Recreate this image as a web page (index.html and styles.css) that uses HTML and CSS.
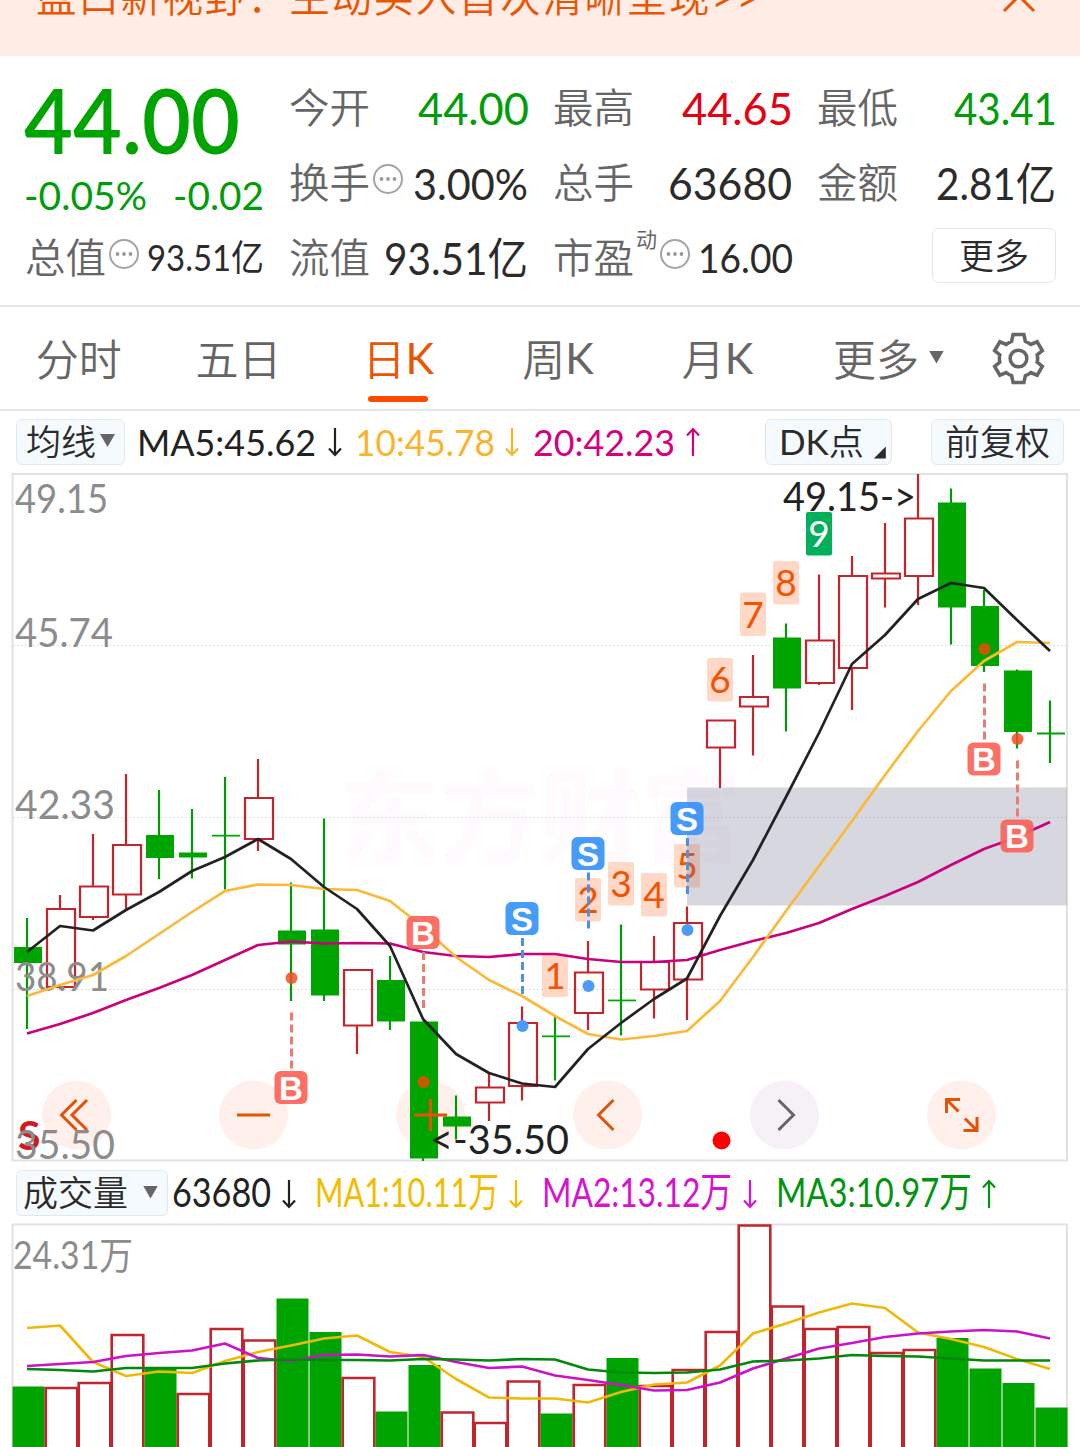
FILE: index.html
```html
<!DOCTYPE html>
<html lang="zh-CN">
<head>
<meta charset="utf-8">
<title>日K</title>
<link rel="stylesheet" href="styles.css">
</head>
<body>
<div class="banner">
  <span class="banner-text">盘口新视野：主动买入首次清晰呈现<span class="latin">&gt;&gt;</span></span>
  <svg class="banner-close" width="34" height="34" viewBox="0 0 34 34"><path d="M2 2 32 32M32 2 2 32"/></svg>
</div>

<section class="quote">
  <div class="col">
    <div class="price"><svg class="num strong green" width="215" height="80"><text x="-2" y="73" font-size="90" textLength="216" lengthAdjust="spacingAndGlyphs">44.00</text></svg></div>
    <div class="change">
      <svg class="num green" width="121" height="40"><text x="-2" y="35.500" font-size="39.5" textLength="123" lengthAdjust="spacingAndGlyphs">-0.05%</text></svg>
      <svg class="num green" width="89" height="40"><text x="-1" y="35.500" font-size="39.5" textLength="91" lengthAdjust="spacingAndGlyphs">-0.02</text></svg>
    </div>
    <div class="cell"><span class="label">总值</span><svg class="info" viewBox="0 0 32 32"><use href="#info"/></svg><svg class="num push" width="115" height="44"><text x="-1" y="34" font-size="36" textLength="117" lengthAdjust="spacingAndGlyphs">93.51亿</text></svg></div>
  </div>
  <div class="col">
    <div class="cell"><span class="label">今开</span><svg class="num push green" width="108" height="44"><text x="-1" y="38" font-size="44" textLength="111" lengthAdjust="spacingAndGlyphs">44.00</text></svg></div>
    <div class="cell"><span class="label">换手</span><svg class="info" viewBox="0 0 32 32"><use href="#info"/></svg><svg class="num push" width="113" height="44"><text x="-1" y="38" font-size="43" textLength="115" lengthAdjust="spacingAndGlyphs">3.00%</text></svg></div>
    <div class="cell"><span class="label">流值</span><svg class="num push" width="142" height="44"><text x="-1" y="38" font-size="44" textLength="144" lengthAdjust="spacingAndGlyphs">93.51亿</text></svg></div>
  </div>
  <div class="col">
    <div class="cell"><span class="label">最高</span><svg class="num push red" width="108" height="44"><text x="-1" y="38" font-size="44" textLength="111" lengthAdjust="spacingAndGlyphs">44.65</text></svg></div>
    <div class="cell"><span class="label">总手</span><svg class="num push" width="121" height="44"><text x="-2" y="38" font-size="44" textLength="124" lengthAdjust="spacingAndGlyphs">63680</text></svg></div>
    <div class="cell"><span class="label">市盈</span><span class="sup">动</span><svg class="info" viewBox="0 0 32 32"><use href="#info"/></svg><svg class="num push" width="90" height="44"><text x="-3" y="36" font-size="40" textLength="95" lengthAdjust="spacingAndGlyphs">16.00</text></svg></div>
  </div>
  <div class="col">
    <div class="cell"><span class="label">最低</span><svg class="num push green" width="100" height="44"><text x="-1" y="38" font-size="44" textLength="103" lengthAdjust="spacingAndGlyphs">43.41</text></svg></div>
    <div class="cell"><span class="label">金额</span><svg class="num push" width="118" height="44"><text x="-1" y="38" font-size="44" textLength="120" lengthAdjust="spacingAndGlyphs">2.81亿</text></svg></div>
    <div class="cell"><button class="more">更多</button></div>
  </div>
</section>

<nav class="tabs">
  <a class="tab">分时</a>
  <a class="tab">五日</a>
  <a class="tab active">日<span class="latin">K</span></a>
  <a class="tab">周<span class="latin">K</span></a>
  <a class="tab">月<span class="latin">K</span></a>
  <a class="tab tab-more">更多<i class="tri"></i></a>
  <svg class="gear" viewBox="-27 -27 54 54"><path d="M-5.500-24.500H5.500L7-17.500Q10-16.500 12.500-14.300L19-17 24.300-8 19-3.700Q20 0 19 3.700L24.300 8 19 17 12.500 14.300Q10 16.500 7 17.500L5.500 24.500H-5.500L-7 17.500Q-10 16.500-12.500 14.300L-19 17-24.300 8-19 3.700Q-20 0-19-3.700L-24.300-8-19-17-12.500-14.300Q-10-16.500-7-17.500Z"/><circle r="8.500"/></svg>
</nav>

<div class="legend legend-price">
  <button class="chip chip-ma">均线<i class="tri"></i></button>
  <div class="series s-black"><svg class="num" width="177" height="44"><text x="-2" y="36" font-size="37.5" textLength="179" lengthAdjust="spacingAndGlyphs">MA5:45.62</text></svg><svg class="arrow" viewBox="0 0 14 30"><use href="#down"/></svg></div>
  <div class="series s-orange"><svg class="num" width="137" height="44"><text x="-2" y="36" font-size="37.5" textLength="140" lengthAdjust="spacingAndGlyphs">10:45.78</text></svg><svg class="arrow" viewBox="0 0 14 30"><use href="#down"/></svg></div>
  <div class="series s-pink"><svg class="num" width="140" height="44"><text x="-1" y="36" font-size="37.5" textLength="142" lengthAdjust="spacingAndGlyphs">20:42.23</text></svg><svg class="arrow" viewBox="0 0 14 30"><use href="#up"/></svg></div>
  <button class="chip chip-dk"><span class="latin">DK</span>点<i class="corner"></i></button>
  <button class="chip chip-adj">前复权</button>
</div>

<svg class="chart" id="price" viewBox="0 472 1080 690">
  <text class="watermark" x="338" y="855" textLength="404">东方财富</text>
  <path class="frame" d="M12.5 474H1067V1160.500H12.500Z"/>
  <path class="grid" d="M13 645.500H1067M13 817.500H1067M13 989.500H1067"/>
  <g class="pads">
    <circle cx="76.500" cy="1115" r="34.500"/><circle cx="253.500" cy="1115" r="34.500"/><circle cx="430.500" cy="1115" r="34.500"/><circle cx="607.500" cy="1115" r="34.500"/><circle class="off" cx="784.500" cy="1115" r="34.500"/><circle cx="961.500" cy="1115" r="34.500"/>
  </g>
  <text class="note" x="783" y="511" textLength="133" lengthAdjust="spacingAndGlyphs">49.15-&gt;</text>
  <g id="tags"></g>
  <rect class="gap" x="687" y="787.500" width="380" height="118"/>
  <g id="candles"></g>
  <g class="axis">
    <text x="15" y="513" textLength="93" lengthAdjust="spacingAndGlyphs">49.15</text>
    <text x="15" y="647" textLength="98" lengthAdjust="spacingAndGlyphs">45.74</text>
    <text x="15" y="819" textLength="100" lengthAdjust="spacingAndGlyphs">42.33</text>
    <text x="15" y="991" textLength="94" lengthAdjust="spacingAndGlyphs">38.91</text>
  </g>
  <g id="averages"></g>
  <g id="signals"></g>
  <text class="split" x="18" y="1150">S</text>
  <g class="axis"><text x="15" y="1159" textLength="100" lengthAdjust="spacingAndGlyphs">35.50</text></g>
  <text class="note" x="430" y="1154" textLength="139" lengthAdjust="spacingAndGlyphs">&lt;-35.50</text>
  <circle cx="721.500" cy="1140.500" r="9" fill="#f00"/>
  <g class="icons">
    <path d="M76.500 1100 61.500 1115 76.500 1130M87 1100 72 1115 87 1130"/>
    <path d="M237 1115H270"/>
    <path d="M414 1115H447M430.500 1099V1131"/>
    <path d="M613.500 1100 598.500 1115 613.500 1130"/>
    <path class="off" d="M778.500 1100 793.500 1115 778.500 1130"/>
    <path d="M946.500 1113V1099.500H960M947 1100 958.500 1111.500M977 1117V1130.500H963.500M976.500 1130 965 1118.500"/>
  </g>
</svg>

<div class="legend legend-volume">
  <button class="chip chip-vol">成交量<i class="tri"></i></button>
  <div class="series s-black"><svg class="num" width="97" height="44"><text x="-1" y="36" font-size="41" textLength="99" lengthAdjust="spacingAndGlyphs">63680</text></svg><svg class="arrow" viewBox="0 0 14 30"><use href="#down"/></svg></div>
  <div class="series s-yellow"><svg class="num" width="181" height="44"><text x="-2" y="36" font-size="41" textLength="184" lengthAdjust="spacingAndGlyphs">MA1:10.11万</text></svg><svg class="arrow" viewBox="0 0 14 30"><use href="#down"/></svg></div>
  <div class="series s-purple"><svg class="num" width="187" height="44"><text x="-2" y="36" font-size="41" textLength="190" lengthAdjust="spacingAndGlyphs">MA2:13.12万</text></svg><svg class="arrow" viewBox="0 0 14 30"><use href="#down"/></svg></div>
  <div class="series s-green"><svg class="num" width="193" height="44"><text x="-2" y="36" font-size="41" textLength="196" lengthAdjust="spacingAndGlyphs">MA3:10.97万</text></svg><svg class="arrow" viewBox="0 0 14 30"><use href="#up"/></svg></div>
</div>

<svg class="chart" id="volume" viewBox="0 1222 1080 225">
  <path class="frame" d="M12.500 1450V1224.500H1067V1450"/>
  <g class="axis"><text x="13" y="1269" textLength="120" font-size="38" lengthAdjust="spacingAndGlyphs">24.31万</text></g>
  <g id="bars"></g>
  <g id="volume-averages"></g>
</svg>

<svg class="defs" width="0" height="0">
  <defs>
    <g id="info"><circle cx="16" cy="16" r="14" fill="none" stroke="#a3a3a3" stroke-width="2"/><g fill="#999"><circle cx="9.500" cy="16" r="1.900"/><circle cx="16" cy="16" r="1.900"/><circle cx="22.500" cy="16" r="1.900"/></g></g>
    <path id="down" d="M7 1V28M1 21.500 7 28 13 21.500"/>
    <path id="up" d="M7 29V2M1 8.500 7 2 13 8.500"/>
  </defs>
</svg>
<script src="chart.js"></script>
</body>
</html>
```
FILE: styles.css
```css
* { box-sizing: border-box; }
body {
  margin: 0;
  width: 1080px;
  height: 1447px;
  overflow: hidden;
  background: #fff;
  color: #2b2b2b;
  font-family: Lato, "Noto Sans CJK SC", sans-serif;
}
svg { display: block; flex: none; }
button { font-family: inherit; color: inherit; padding: 0; margin: 0; }
.defs { height: 0; }
.latin { font-weight: 400; }

.banner {
  height: 56px;
  background: #ffece4;
  display: flex;
  justify-content: space-between;
  padding: 0 44px 0 36px;
  overflow: hidden;
  color: #ea5504;
}
.banner-text {
  font: 350 40.500px/60px Lato, "Noto Sans CJK SC", sans-serif;
  letter-spacing: 1.700px;
  margin-top: -33px;
  white-space: nowrap;
}
.banner-close { margin-top: -21px; fill: none; stroke: #ea5504; stroke-width: 3; }

.num { overflow: visible; fill: currentColor; }
.strong { font-weight: 600; }
.green { color: #009d08; }
.strong.green { color: #00a400; }
.red { color: #e60012; }

.quote {
  height: 251px;
  padding: 15px 25px 0 26px;
  display: grid;
  grid-template-columns: repeat(4, 237px);
  column-gap: 27px;
  border-bottom: 2px solid #e6e6e6;
}
.col { display: flex; flex-direction: column; }
.cell { height: 75px; display: flex; align-items: center; }
.label { font-size: 40.500px; line-height: 60px; margin: -2px 1px 0 -1px; color: #666; font-weight: 350; white-space: nowrap; }
.info { width: 32px; height: 32px; margin: -9px 0 0 1px; }
.push { margin-left: auto; }
.sup { font-size: 21px; line-height: 24px; color: #666; margin: -40px 0 0 1px; }
.sup + .info { margin-left: 2px; }
.price { height: 98px; padding-top: 10px; }
.change { height: 52px; padding-top: 5px; display: flex; justify-content: space-between; }
.more {
  width: 124px;
  height: 55px;
  margin: -7px -1px 0 auto;
  border: 1.500px solid #e6e6e9;
  border-radius: 7px;
  background: #fff;
  font-size: 35px;
  font-weight: 350;
  line-height: 50px;
}

.tabs {
  height: 104px;
  display: flex;
  align-items: center;
  border-bottom: 2px solid #e6e6e6;
  color: #666;
  font-size: 43px;
  font-weight: 350;
}
.tab {
  width: 159.700px;
  height: 102px;
  display: flex;
  justify-content: center;
  align-items: center;
  position: relative;
  padding-bottom: 2px;
  white-space: nowrap;
}
.tab:first-child { margin-left: -1px; }
.active { color: #ea5504; }
.active::after {
  content: "";
  position: absolute;
  left: 50px;
  bottom: 7px;
  width: 60px;
  height: 6px;
  border-radius: 3px;
  background: #fa4b00;
}
.tab-more { width: 182px; }
.tab-more .tri { margin-left: 10px; }
.gear { width: 53px; height: 53px; margin-left: 13px; fill: none; stroke: #666; stroke-width: 3.600; stroke-linejoin: miter; }
.tri {
  width: 15px;
  height: 13px;
  background: #666;
  clip-path: polygon(0 0, 100% 0, 50% 100%);
}

.legend { display: flex; align-items: center; }
.legend-price { height: 61px; padding: 0 16px; }
.legend-volume { height: 60px; padding: 2px 16px 0; }
.chip {
  height: 46px;
  display: flex;
  align-items: center;
  border: 1.500px solid #e3e8f0;
  border-radius: 6px;
  background: #f5faff;
  font-size: 35px;
  font-weight: 350;
  line-height: 38px;
  padding-bottom: 2px;
  white-space: nowrap;
}
.chip-ma { width: 109px; padding-left: 9px; margin-right: 14px; }
.chip-ma .tri { margin-left: 4px; }
.chip-dk { width: 127px; padding-left: 13px; margin: 1px 0 0 auto; }
.chip-adj { width: 133px; justify-content: center; margin: 1px 0 0 39px; }
.chip-vol { width: 152px; padding-left: 6px; margin-right: 5px; }
.chip-vol .tri { margin-left: 15px; }
.corner {
  width: 12px;
  height: 12px;
  margin: 23px 0 0 10px;
  background: #2b2b2b;
  clip-path: polygon(100% 0, 100% 100%, 0 100%);
}
.series { display: flex; align-items: center; margin-right: 15px; }
.legend-volume .series { margin-right: 21px; }
.arrow { width: 14px; height: 30px; margin: 1px 0 0 11.500px; fill: none; stroke: currentColor; stroke-width: 2.200; }
.s-black { color: #222; }
.s-orange { color: #fbb32b; }
.s-pink { color: #d4007f; }
.s-yellow { color: #f2bd00; }
.s-purple { color: #d614d0; }
.s-green { color: #00940f; }

.chart { width: 1080px; }
#price { height: 690px; }
#volume { height: 225px; }
.frame { fill: none; stroke: #e2e2e2; stroke-width: 2; }
.grid { stroke: #d4d4d4; stroke-width: 1; stroke-dasharray: 1.500 2.500; }
.watermark { font-size: 101px; font-weight: 700; fill: #fefafe; }
.axis { fill: #8c8c8c; font-size: 40.500px; }
.note { font-size: 41px; fill: #222; }
.split { font-size: 41px; font-weight: 700; fill: #cf1b25; }
.gap { fill: #6d708d; fill-opacity: .28; }
.pads { fill: #fff0eb; }
.pads .off { fill: #f5f1f6; }
.icons { fill: none; stroke: #e35205; stroke-width: 3; }
.icons .off { stroke: #666; }

.up { fill: none; stroke: #c4242c; stroke-width: 2.200; }
.down { fill: #00a400; }
.down-wick { stroke: #009a08; stroke-width: 2.200; }
.bar-up { fill: none; stroke: #c4242c; stroke-width: 2.600; }
.ma { fill: none; stroke-width: 2.700; stroke-linejoin: round; }
.ma5 { stroke: #222; }
.ma10 { stroke: #fbb937; }
.ma20 { stroke: #cb007c; }
.v1 { stroke: #efb90a; }
.v2 { stroke: #cc12c8; }
.v3 { stroke: #00890c; }
.tag { fill: #ffd8c8; }
.tag-text { font-size: 37px; fill: #f55200; text-anchor: middle; }
.tag-done { fill: #00b05a; }
.tag-done + .tag-text { fill: #fff; }
.badge { opacity: .92; }
.buy { fill: #fd6459; }
.sell { fill: #3794fa; }
.buy-line { stroke: #ed7c70; }
.sell-line { stroke: #4b93e2; }
.lead { stroke-width: 3; stroke-dasharray: 8 4; }
.buy-dot { fill: #f24e22; fill-opacity: .85; }
.over { fill: #c85a00; fill-opacity: 1; }
.sell-dot { fill: #4b9bf8; }
.mark { font: 700 33px "Liberation Sans", Arial, sans-serif; fill: #fff; text-anchor: middle; }
```
FILE: chart.js
```js
const x = i => 27 + 33 * i;
const put = (id, html) => { document.getElementById(id).innerHTML = html; };

// [direction, high, body top, body bottom, low]
const candles = [
  ['d',918,947,963,1029],['u',895,909,987,989],['u',834,886.5,917,920],['u',774,845,894.5,909],
  ['d',790,835,858,879],['d',809,852.5,857.5,878.5],['d',777,834.8,836.5,889.5],['u',759,798,839,851],
  ['d',882.5,930.5,944.5,1001],['d',818.5,929.5,995.5,1001],['u',970,970,1025.5,1054],['d',956,980,1021.5,1030],
  ['d',1021.5,1021.5,1158.5,1161],['d',1095.5,1116.5,1126.5,1139.5],['u',1073.5,1087.5,1102.5,1121],['u',1006.5,1023,1086,1100.5],
  ['d',1015.5,1035.5,1037.2,1080.5],['u',941,972.5,1013,1030],['d',924.5,999.6,1001.3,1035.5],['u',936,962,989.5,1018.5],
  ['u',906.5,923,979.5,1020],['u',720.5,720.5,747.5,788],['u',655,697,706.5,755.5],['d',623.5,637.5,688.5,731.5],
  ['u',574.5,640.5,683,685],['u',556,576,668,710],['u',523,573.5,578.5,607.5],['u',474,518.5,576,605],
  ['d',488.5,502.5,607.5,644.5],['d',590,606,666,672],['d',669.5,670.5,732,748.5],['d',700.5,732.5,734.5,763]
];
put('candles', candles.map(([dir, hi, top, bot, lo], i) => {
  const c = x(i);
  return dir === 'u'
    ? `<path class="up" d="M${c} ${hi}V${top}M${c} ${bot}V${lo}M${c - 13} ${top}H${c + 15}V${bot}H${c - 13}Z"/>`
    : `<path class="down-wick" d="M${c} ${hi}V${lo}"/><rect class="down" x="${c - 13}" y="${top}" width="28" height="${bot - top}"/>`;
}).join(''));

const line = (cls, ys) => `<polyline class="ma ${cls}" points="${ys.map((y, i) => x(i) + ',' + y).join(' ')}"/>`;
put('averages',
  line('ma20', [1033.5,1024,1013,1000,988,975,960,945,941.5,943.5,943,943.5,952,956,957,954,954,959,962,962,960,950,941,933,923,909,896,882,865,849,837,822]) +
  line('ma10', [996,985,975,956,934,912,891,884.5,885,889,890,901,927,957,980,996,1016,1034,1039.5,1036,1031,1001,957,911,866,821,775,731,691,661,642,643]) +
  line('ma5', [952,926,930.5,910,892,871,857,839,859,887,909,946,1019,1054,1073,1083.5,1087,1049,1023,999,978.5,916,860,797,733,664,635,599,583,588,620,651]));

// [label, candle index, top]
const tags = [[1,16,953.5],[2,17,878],[3,18,862],[4,19,873],[5,20,844],[6,21,658],[7,22,592.5],[8,23,561],[9,24,512]];
put('tags', tags.map(([n, i, y]) =>
  `<rect class="${n === 9 ? 'tag-done' : 'tag'}" x="${x(i) - 13}" y="${y}" width="26" height="43.5" rx="2"/><text class="tag-text" x="${x(i)}" y="${y + 35}">${n}</text>`).join(''));

// [side, candle index, badge centre, line start, line end, dot, dot lies on a body]
const signals = [
  ['B',8,1087.5,1012.5,1069,978],['B',12,932.5,952,1008,1082,1],['B',29,759,683.5,740,649,1],['B',30,836,760.5,817,739],
  ['S',15,918.5,938,994,1026],['S',17,853.5,872.5,929,986],['S',20,818.5,838,894,930]
];
put('signals', signals.map(([t, i, y, a, b, dot, over]) => {
  const k = t === 'B' ? 'buy' : 'sell', c = x(i);
  return `<path class="lead ${k}-line" d="M${c + .5} ${a}V${b}"/><circle class="${k}-dot${over ? ' over' : ''}" cx="${c + .5}" cy="${dot}" r="6"/>` +
    `<g class="badge"><rect class="${k}" x="${c - 16.5}" y="${y - 16.5}" width="33" height="33" rx="6"/><text class="mark" x="${c}" y="${y + 12}">${t}</text></g>`;
}).join(''));

const bars = 'd1386.5 u1388 u1383 u1335 d1368 u1394 u1329 u1340.5 d1298.5 d1332 u1378 d1411.5 d1365 u1412.5 u1423 u1381.5 d1413.5 u1385 d1358 u1386 u1370 u1332 u1225.5 u1306.5 u1329 u1327 u1353 u1350 d1338 d1368.5 d1383 d1407.5'.split(' ');
put('bars', bars.map((b, i) => {
  const y = +b.slice(1), l = 12 + 33 * i;
  return b[0] === 'u'
    ? `<path class="bar-up" d="M${l + .7} 1450V${y}H${l + 32.3}V1450"/>`
    : `<rect class="down" x="${l + .5}" y="${y}" width="32" height="${1450 - y}"/>`;
}).join(''));

put('volume-averages',
  line('v1', [1328,1325.5,1362,1376,1371.5,1373,1361,1352,1345.5,1338.5,1335.5,1352,1357,1379,1397.5,1398.5,1398.5,1402.5,1392,1384.5,1382.5,1365.5,1333.5,1323.5,1312.5,1303.5,1308,1332.5,1339,1347,1359,1369]) +
  line('v2', [1366,1364,1362,1356,1353,1350.5,1343.5,1358,1361,1355,1354.5,1356.5,1355,1362,1368,1366.5,1375.5,1380,1385,1390.5,1390,1382.5,1368.5,1358.5,1348.5,1343,1337,1333.5,1331.5,1330,1331.5,1338.5]) +
  line('v3', [1369,1370,1371.5,1368,1368,1368,1363.5,1360.5,1359.5,1360,1360,1360.5,1359,1359.5,1360.5,1359,1359.5,1369.5,1372.5,1373,1372.5,1369.5,1361.5,1360.5,1358.5,1355,1356,1356.5,1358.5,1360.5,1360.5,1360.5]));
```
